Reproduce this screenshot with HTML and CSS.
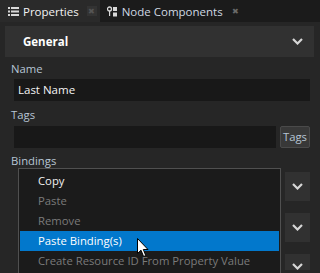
FILE: index.html
```html
<!DOCTYPE html>
<html>
  <head>
    <title>Properties</title>
	<link rel="stylesheet" href="styles.css">
  </head>
  <body>
	<div class="tabs">
		<div class="tab active">
			<svg class="tabicon" width="11" height="9" viewBox="0 0 11 9">
				<rect x="0" y="0" width="2" height="2" fill="#d8d8d8"/>
				<rect x="3" y="0" width="8" height="2" fill="#d8d8d8"/>
				<rect x="0" y="3.5" width="2" height="2" fill="#d8d8d8"/>
				<rect x="3" y="3.5" width="8" height="2" fill="#d8d8d8"/>
				<rect x="0" y="7" width="2" height="2" fill="#d8d8d8"/>
				<rect x="3" y="7" width="8" height="2" fill="#d8d8d8"/>
			</svg>
			<span class="tabtext">Properties</span>
			<span class="close boxed">&#x2716;</span>
		</div>
		<div class="tab">
			<svg class="tabicon" width="11" height="11" viewBox="0 0 11 11">
				<circle cx="2.5" cy="3" r="2" fill="none" stroke="#d8d8d8" stroke-width="1.3"/>
				<rect x="2" y="5" width="1.2" height="5" fill="#d8d8d8"/>
				<rect x="6" y="1" width="4" height="4" fill="#d8d8d8"/>
				<rect x="6" y="6.5" width="4" height="4" fill="#d8d8d8"/>
			</svg>
			<span class="tabtext dim">Node Components</span>
			<span class="close">&#x2716;</span>
		</div>
	</div>

	<div class="panel">
		<div class="sectionhead">
			<span class="sectiontitle">General</span>
			<svg class="chevron" width="11" height="7" viewBox="0 0 11 7"><path d="M1 1 L5.5 5.5 L10 1" fill="none" stroke="#d6d6d6" stroke-width="2.2"/></svg>
		</div>

		<div class="label">Name</div>
		<div class="input">Last Name</div>

		<div class="label">Tags</div>
		<div class="row">
			<div class="input grow"></div>
			<div class="button">Tags</div>
		</div>

		<div class="label bindings">Bindings</div>
		<div class="binding">
			<div class="bindbtn"><svg width="11" height="7" viewBox="0 0 11 7"><path d="M1 1 L5.5 5.5 L10 1" fill="none" stroke="#d6d6d6" stroke-width="2.2"/></svg></div>
		</div>
		<div class="binding">
			<div class="bindbtn"><svg width="11" height="7" viewBox="0 0 11 7"><path d="M1 1 L5.5 5.5 L10 1" fill="none" stroke="#d6d6d6" stroke-width="2.2"/></svg></div>
		</div>
		<div class="binding last">
			<div class="bindbtn"><svg width="11" height="7" viewBox="0 0 11 7"><path d="M1 1 L5.5 5.5 L10 1" fill="none" stroke="#d6d6d6" stroke-width="2.2"/></svg></div>
		</div>
	</div>

	<div class="menu">
		<div class="item">Copy</div>
		<div class="item disabled">Paste</div>
		<div class="item disabled">Remove</div>
		<div class="item selected">Paste Binding(s)</div>
		<div class="item disabled">Create Resource ID From Property Value</div>
	</div>

	<svg class="cursor" width="12" height="20" viewBox="0 0 12 20">
		<path d="M0.5 0.5 L0.5 15.5 L4 12.2 L6.6 18.5 L8.8 17.6 L6.3 11.5 L11 11.5 Z" fill="#ffffff" stroke="#000000" stroke-width="1"/>
	</svg>
  </body>
</html>
```

FILE: styles.css
```css
body{
	margin:0;
	width:320px;
	height:273px;
	overflow:hidden;
	background:#262626;
	font-family:"Open Sans", "Noto Sans", sans-serif;
	font-size:11.3px;
	color:#e8e8e8;
	position:relative;
}

.tabs{
	display:flex;
	height:22px;
	background:#1b1b1b;
}
.tab{
	display:flex;
	align-items:center;
	padding:0 6px 0 7px;
}
.tab.active{
	background:#2a2a2a;
	padding:0 3px 0 8px;
}
.tabicon{
	flex-shrink:0;
	margin-right:4px;
}
.tabtext{
	font-size:11.5px;
	color:#f2f2f2;
	white-space:nowrap;
}
.tabtext.dim{
	color:#cfd8e2;
}
.close{
	margin-left:8px;
	font-size:8px;
	color:#6a6a6a;
	width:10px;
	height:10px;
	line-height:10px;
	text-align:center;
}
.close.boxed{
	background:#333333;
	color:#555555;
}

.panel{
	padding:4px 6px 0 5px;
}
.sectionhead{
	height:31px;
	background:#313131;
	display:flex;
	align-items:center;
	justify-content:space-between;
	padding:0 11px 0 18px;
}
.sectiontitle{
	font-weight:bold;
	font-size:11.5px;
	color:#ffffff;
}

.label{
	color:#b6c5d4;
	margin:3px 0 0 6px;
	height:18px;
	line-height:18px;
}
.input{
	background:#181818;
	height:22px;
	line-height:22px;
	margin:1px 4px 5px 9px;
	padding-left:4px;
	color:#f4f4f4;
	font-size:11.5px;
}
.row{
	display:flex;
	align-items:center;
	margin:2px 0 0 9px;
}
.row .input{
	flex:1;
	margin:0 4px 0 0;
}
.button{
	width:28px;
	height:20px;
	line-height:20px;
	text-align:center;
	background:#383838;
	border:1px solid #4a4a4a;
	border-radius:2px;
	color:#b6c5d4;
	margin-right:4px;
}
.bindings{
	margin-top:4px;
}
.binding{
	display:flex;
	justify-content:flex-end;
	height:29px;
	margin:2px 4px 12px 9px;
}
.binding.last{
	height:16px;
	margin-bottom:0;
}
.bindbtn{
	width:25px;
	background:#313131;
	display:flex;
	align-items:center;
	justify-content:center;
}
.binding.last .bindbtn{
	align-items:flex-end;
}

.menu{
	position:absolute;
	left:18px;
	top:168px;
	width:263px;
	height:106px;
	background:#1b1b1b;
	border:1px solid #505050;
	border-bottom:0;
	padding:2px 1px 0 1px;
	box-sizing:border-box;
}
.item{
	height:20px;
	line-height:20px;
	padding-left:18px;
	color:#f0f0f0;
}
.item.disabled{
	color:#7a7a7a;
}
.item.selected{
	background:#0278cc;
	color:#ffffff;
}
.cursor{
	position:absolute;
	left:137px;
	top:238px;
}
```
